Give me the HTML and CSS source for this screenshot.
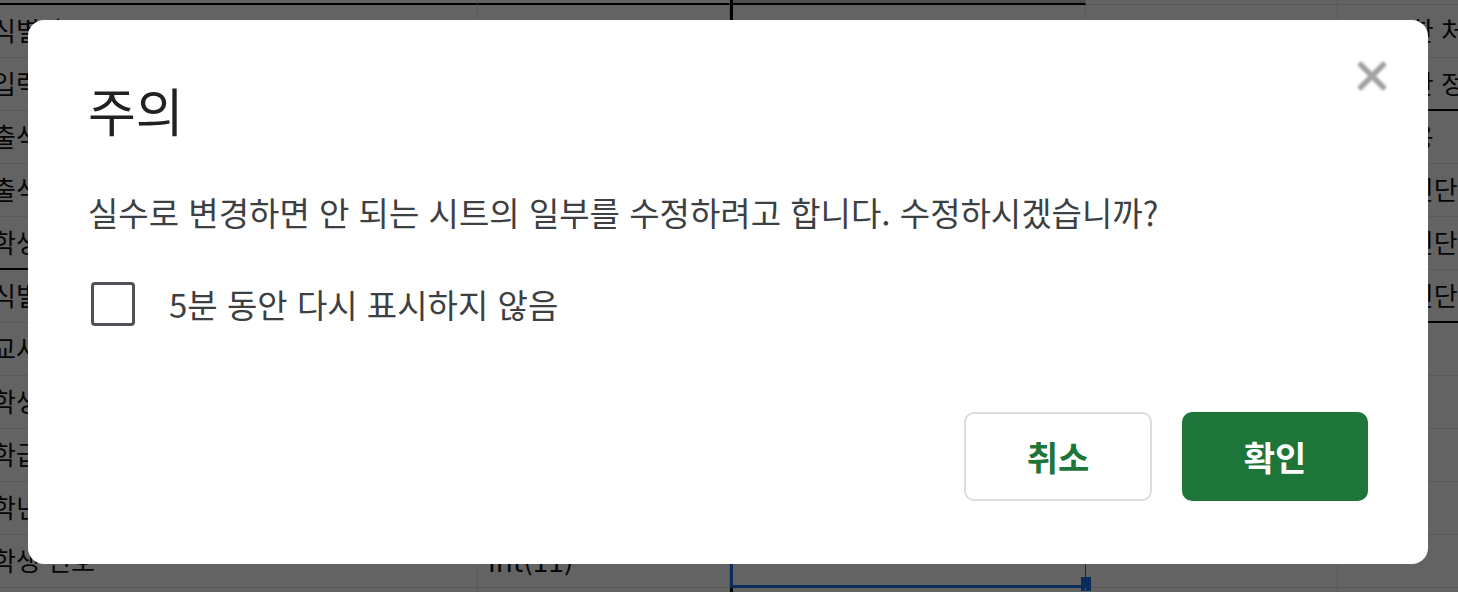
FILE: index.html
```html
<!DOCTYPE html>
<html lang="ko">
<head>
    <meta charset="UTF-8">
    <meta name="viewport" content="width=device-width, initial-scale=1.0">
    <title>주의</title>
    <link rel="stylesheet" href="styles.css">
</head>
<body>
    <!-- Spreadsheet behind the dialog -->
    <div class="sheet">
        <div class="row row-top">
            <div class="cell c1"></div><div class="cell c2"></div><div class="cell c3 head"></div><div class="cell c4"></div><div class="cell c5"></div>
        </div>
        <div class="row">
            <div class="cell c1">식별자 ID</div><div class="cell c2"></div><div class="cell c3"></div><div class="cell c4"></div><div class="cell c5">고유한 처리</div>
        </div>
        <div class="row">
            <div class="cell c1">입력 일시</div><div class="cell c2"></div><div class="cell c3"></div><div class="cell c4"></div><div class="cell c5 thick">고유한 정보</div>
        </div>
        <div class="row">
            <div class="cell c1">출석 상태</div><div class="cell c2"></div><div class="cell c3"></div><div class="cell c4"></div><div class="cell c5">미사용</div>
        </div>
        <div class="row">
            <div class="cell c1">출석 일자</div><div class="cell c2"></div><div class="cell c3"></div><div class="cell c4"></div><div class="cell c5">자가진단</div>
        </div>
        <div class="row">
            <div class="cell c1 thick">학생 이름</div><div class="cell c2"></div><div class="cell c3"></div><div class="cell c4"></div><div class="cell c5">건강진단</div>
        </div>
        <div class="row">
            <div class="cell c1">식별자 ID</div><div class="cell c2"></div><div class="cell c3"></div><div class="cell c4"></div><div class="cell c5 thick">정밀진단</div>
        </div>
        <div class="row">
            <div class="cell c1">교사 이름</div><div class="cell c2"></div><div class="cell c3"></div><div class="cell c4"></div><div class="cell c5"></div>
        </div>
        <div class="row">
            <div class="cell c1">학생 이름</div><div class="cell c2"></div><div class="cell c3"></div><div class="cell c4"></div><div class="cell c5"></div>
        </div>
        <div class="row">
            <div class="cell c1">학급 번호</div><div class="cell c2"></div><div class="cell c3"></div><div class="cell c4"></div><div class="cell c5"></div>
        </div>
        <div class="row">
            <div class="cell c1">학년</div><div class="cell c2"></div><div class="cell c3"></div><div class="cell c4"></div><div class="cell c5"></div>
        </div>
        <div class="row">
            <div class="cell c1">학생 번호</div><div class="cell c2">int(11)</div><div class="cell c3 selected"><span class="handle"></span></div><div class="cell c4"></div><div class="cell c5"></div>
        </div>
        <div class="row">
            <div class="cell c1"></div><div class="cell c2"></div><div class="cell c3"></div><div class="cell c4"></div><div class="cell c5"></div>
        </div>
    </div>

    <!-- Warning dialog -->
    <div class="overlay">
        <div class="dialog">
            <button class="close" aria-label="닫기">
                <svg width="32" height="32" viewBox="0 0 32 32">
                    <path d="M5 5 L27 27 M27 5 L5 27" stroke="#a3a3a3" stroke-width="5.5" stroke-linecap="square"/>
                </svg>
            </button>
            <h2 class="title">주의</h2>
            <p class="message">실수로 변경하면 안 되는 시트의 일부를 수정하려고 합니다. 수정하시겠습니까?</p>
            <label class="check">
                <span class="box"></span>
                <span class="check-label">5분 동안 다시 표시하지 않음</span>
            </label>
            <div class="actions">
                <button class="btn btn-cancel">취소</button>
                <button class="btn btn-ok">확인</button>
            </div>
        </div>
    </div>
</body>
</html>
```

FILE: styles.css
```css
body {
    margin: 0;
    font-family: "Noto Sans CJK KR", "Noto Sans", sans-serif;
    background-color: #fff;
    overflow: hidden;
}

/* sheet */
.sheet {
    margin-left: -10px;
    width: 1500px;
    height: 592px;
    overflow: hidden;
}
.row {
    display: flex;
    height: 53px;
}
.row-top {
    height: 5px;
}
.cell {
    box-sizing: border-box;
    height: 100%;
    border-right: 1px solid #e4e4e4;
    border-bottom: 1px solid #e4e4e4;
    font-size: 26px;
    line-height: 50px;
    color: #111;
    white-space: nowrap;
    overflow: hidden;
    padding-left: 2px;
}
.c1 { width: 488px; }
.c2 { width: 252px; padding-left: 10px; font-size: 28px; }
.c3 { width: 356px; border-left: 3px solid #000; position: relative; overflow: visible; }
.c4 { width: 252px; }
.c5 { width: 152px; padding-left: 24px; }
.row-top .c1, .row-top .c2 { border-bottom: 2px solid #000; }
.row-top .c3 { border-bottom: 2px solid #000; }
.head { background-color: #c8c8c8; }
.thick { border-bottom: 2px solid #000; }
.selected {
    border: 3px solid #1a73e8;
    border-top: none;
    border-right: 1px solid #1a73e8;
}
.handle {
    position: absolute;
    right: -6px;
    bottom: -6px;
    width: 10px;
    height: 14px;
    background-color: #1a73e8;
}

/* dialog */
.overlay {
    position: fixed;
    inset: 0;
    background-color: rgba(0, 0, 0, 0.61);
}
.dialog {
    position: absolute;
    left: 28px;
    top: 20px;
    width: 1400px;
    height: 544px;
    box-sizing: border-box;
    padding: 60px 60px 63px;
    background-color: #fff;
    border-radius: 16px;
    display: flex;
    flex-direction: column;
}
.close {
    position: absolute;
    top: 40px;
    right: 40px;
    padding: 0;
    border: none;
    background: none;
    filter: blur(0.8px);
}
.close svg {
    display: block;
}
.title {
    margin: 0;
    font-size: 52px;
    line-height: 60px;
    font-weight: 400;
    color: #202124;
}
.message {
    margin: 50px 0 0;
    font-size: 33px;
    line-height: 44px;
    color: #3c4043;
}
.check {
    margin-top: 46px;
    display: flex;
    align-items: center;
    gap: 34px;
    font-size: 33px;
    color: #3c4043;
}
.box {
    width: 44px;
    height: 44px;
    box-sizing: border-box;
    margin-left: 3px;
    border: 3px solid #505257;
    border-radius: 4px;
}
.actions {
    margin-top: auto;
    display: flex;
    justify-content: flex-end;
    gap: 30px;
}
.btn {
    height: 89px;
    box-sizing: border-box;
    border-radius: 10px;
    font-family: "Noto Sans CJK KR", sans-serif;
    font-size: 34px;
    font-weight: 700;
    cursor: pointer;
}
.btn-cancel {
    width: 188px;
    background-color: #fff;
    color: #1e7539;
    border: 2px solid #dadce0;
}
.btn-ok {
    width: 186px;
    background-color: #1e7539;
    color: #fff;
    border: none;
}
```
